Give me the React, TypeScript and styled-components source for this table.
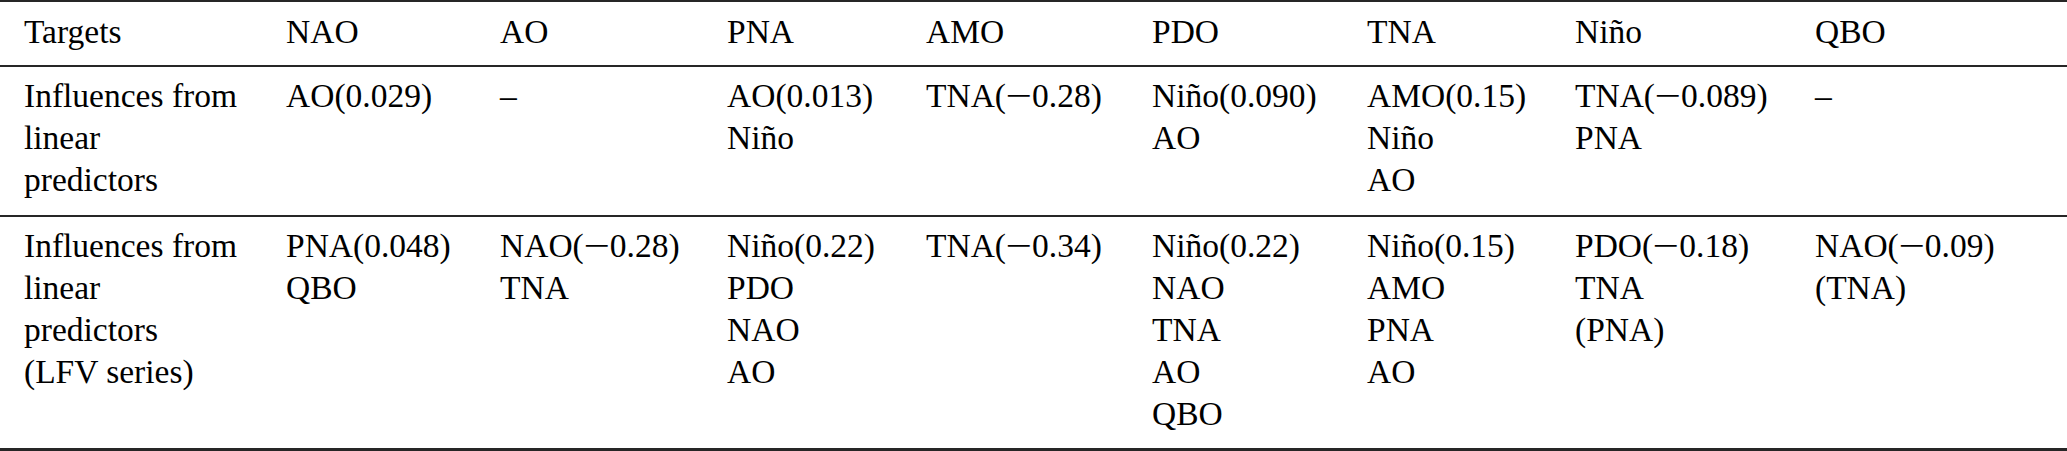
import React from "react";
import styled, { createGlobalStyle } from "styled-components";

const Global = createGlobalStyle`
  html, body { margin: 0; padding: 0; background: #ffffff; }
  body { font-family: "Liberation Serif", "Times New Roman", serif; color: #000; }
`;

const Table = styled.table`
  width: 2067px;
  border-collapse: separate;
  border-spacing: 0;
  table-layout: fixed;
  font-family: "Liberation Serif", "Times New Roman", serif;
  font-size: 33.5px;
  line-height: 42px;
  color: #000;
  border-top: 2px solid #262626;
  border-bottom: 3px solid #262626;
`;

const Cell = styled.td<{ $top: number; $bottom: number; $rule?: boolean }>`
  vertical-align: top;
  text-align: left;
  white-space: nowrap;
  font-weight: normal;
  padding: ${(p) => p.$top}px 0 ${(p) => p.$bottom}px 24px;
  border-bottom: ${(p) => (p.$rule ? "2px solid #262626" : "none")};
`;

const Line = styled.div`
  display: block;
  height: 42px;
`;

const Minus = styled.span`
  display: inline-block;
  width: 0.778em;
  text-align: center;
  transform: scaleX(1.4);
`;

const widths = [262, 214, 227, 199, 226, 215, 208, 240, 276];

const headers = ["Targets", "NAO", "AO", "PNA", "AMO", "PDO", "TNA", "Niño", "QBO"];

type RowSpec = { cells: string[][]; top: number; bottom: number; rule: boolean };

const rows: RowSpec[] = [
  {
    top: 8,
    bottom: 14,
    rule: true,
    cells: [
      ["Influences from", "linear", "predictors"],
      ["AO(0.029)"],
      ["–"],
      ["AO(0.013)", "Niño"],
      ["TNA(−0.28)"],
      ["Niño(0.090)", "AO"],
      ["AMO(0.15)", "Niño", "AO"],
      ["TNA(−0.089)", "PNA"],
      ["–"],
    ],
  },
  {
    top: 8,
    bottom: 13,
    rule: false,
    cells: [
      ["Influences from", "linear", "predictors", "(LFV series)"],
      ["PNA(0.048)", "QBO"],
      ["NAO(−0.28)", "TNA"],
      ["Niño(0.22)", "PDO", "NAO", "AO"],
      ["TNA(−0.34)"],
      ["Niño(0.22)", "NAO", "TNA", "AO", "QBO"],
      ["Niño(0.15)", "AMO", "PNA", "AO"],
      ["PDO(−0.18)", "TNA", "(PNA)"],
      ["NAO(−0.09)", "(TNA)"],
    ],
  },
];

function Text({ value }: { value: string }) {
  const parts = value.split("−");
  return (
    <>
      {parts.map((part, i) => (
        <React.Fragment key={i}>
          {i > 0 && <Minus>−</Minus>}
          {part}
        </React.Fragment>
      ))}
    </>
  );
}

export default function App() {
  return (
    <>
      <Global />
      <Table>
        <colgroup>
          {widths.map((w, i) => (
            <col key={i} style={{ width: w }} />
          ))}
        </colgroup>
        <thead>
          <tr>
            {headers.map((h) => (
              <Cell as="th" key={h} $top={9} $bottom={12} $rule>
                <Line>{h}</Line>
              </Cell>
            ))}
          </tr>
        </thead>
        <tbody>
          {rows.map((row, r) => (
            <tr key={r}>
              {row.cells.map((lines, c) => (
                <Cell key={c} $top={row.top} $bottom={row.bottom} $rule={row.rule}>
                  {lines.map((l, k) => (
                    <Line key={k}>
                      <Text value={l} />
                    </Line>
                  ))}
                </Cell>
              ))}
            </tr>
          ))}
        </tbody>
      </Table>
    </>
  );
}
